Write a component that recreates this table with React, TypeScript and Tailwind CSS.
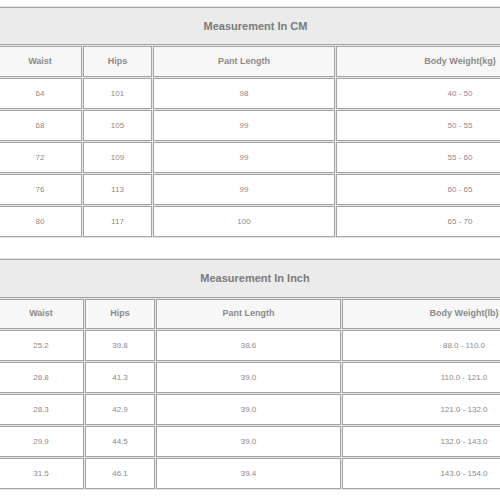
import React from 'react';

interface SizeTableProps {
  title: string;
  cols: string;
  titleH: string;
  headH: string;
  headers: string[];
  rows: string[][];
  lastPad: string;
}

const SizeTable: React.FC<SizeTableProps> = ({ title, cols, titleH, headH, headers, rows, lastPad }) => {
  return (
    <div className={`grid ${cols} gap-px p-px bg-[#e6e6e6] w-max -ml-[3px]`}>
      <div
        className={`col-span-4 ${titleH} flex items-center justify-center bg-[#ebebeb] border border-[#a4a4a4] text-[11px] font-bold text-[#7a7a7a]`}
      >
        {title}
      </div>
      {headers.map((h, i) => (
        <div
          key={h}
          className={`${headH} flex items-center justify-center bg-[#f7f7f7] border border-[#a4a4a4] text-[9px] font-bold text-[#8a8a8a] ${i === 3 ? lastPad : ''}`}
        >
          {h}
        </div>
      ))}
      {rows.map((row, r) =>
        row.map((cell, i) => (
          <div
            key={`${r}-${i}`}
            className={`h-[31px] flex items-center justify-center bg-white border border-[#a4a4a4] text-[8px] text-[#8a8a8a] ${i === 3 ? lastPad : ''}`}
          >
            {cell}
          </div>
        ))
      )}
    </div>
  );
};

export default function App() {
  const cmRows = [
    ['64', '101', '98', '40 - 50'],
    ['68', '105', '99', '50 - 55'],
    ['72', '109', '99', '55 - 60'],
    ['76', '113', '99', '60 - 65'],
    ['80', '117', '100', '65 - 70'],
  ];
  const inchRows = [
    ['25.2', '39.8', '38.6', '88.0 - 110.0'],
    ['26.8', '41.3', '39.0', '110.0 - 121.0'],
    ['28.3', '42.9', '39.0', '121.0 - 132.0'],
    ['29.9', '44.5', '39.0', '132.0 - 143.0'],
    ['31.5', '46.1', '39.4', '143.0 - 154.0'],
  ];

  return (
    <div className="w-[500px] h-[500px] overflow-hidden bg-white pt-[6px] font-['Liberation_Sans',Arial,sans-serif]">
      <SizeTable
        title="Measurement In CM"
        cols="grid-cols-[84px_69px_182px_177px]"
        titleH="h-[38px]"
        headH="h-[31px]"
        headers={['Waist', 'Hips', 'Pant Length', 'Body Weight(kg)']}
        rows={cmRows}
        lastPad="pl-[71px]"
      />
      <div className="mt-[20px]">
        <SizeTable
          title="Measurement In Inch"
          cols="grid-cols-[86px_70px_185px_170px]"
          titleH="h-[39px]"
          headH="h-[30px]"
          headers={['Waist', 'Hips', 'Pant Length', 'Body Weight(lb)']}
          rows={inchRows}
          lastPad="pl-[74px]"
        />
      </div>
    </div>
  );
}
